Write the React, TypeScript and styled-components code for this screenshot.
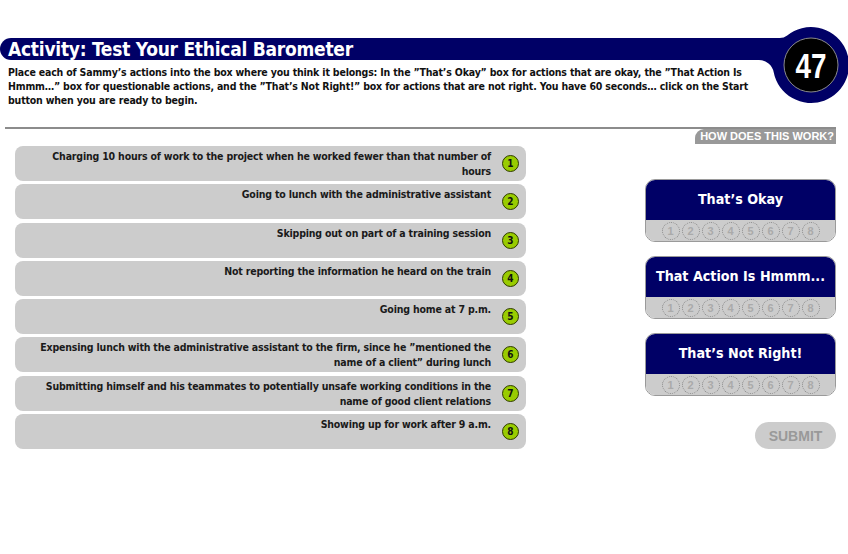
import { Fragment } from "react"
import styled, { createGlobalStyle } from "styled-components"

const GlobalStyle = createGlobalStyle`
  html, body {
    margin: 0;
    padding: 0;
    background: #ffffff;
  }
  body {
    font-family: "DejaVu Sans Condensed", "DejaVu Sans", sans-serif;
    color: #111;
  }
`

// each action is split into the lines it shows on screen
const actions: string[][] = [
  ["Charging 10 hours of work to the project when he worked fewer than that number of", "hours"],
  ["Going to lunch with the administrative assistant"],
  ["Skipping out on part of a training session"],
  ["Not reporting the information he heard on the train"],
  ["Going home at 7 p.m."],
  [
    "Expensing lunch with the administrative assistant to the firm, since he \u201Dmentioned the",
    "name of a client\u201D during lunch",
  ],
  [
    "Submitting himself and his teammates to potentially unsafe working conditions in the",
    "name of good client relations",
  ],
  ["Showing up for work after 9 a.m."],
]

const boxes = ["That\u2019s Okay", "That Action Is Hmmm...", "That\u2019s Not Right!"]

const ScreenBadge = () => (
  <BadgeWrap>
    <svg width="108" height="80" viewBox="740 25 108 80">
      <path
        d="M740 38 L779.7 38 A12 12 0 0 0 787.2 35.4 A38 38 0 1 1 773.7 72.2 A15 15 0 0 0 759 60 L740 60 Z"
        fill="#000066"
      />
      <circle cx="811" cy="65" r="27" fill="#000" stroke="#8a8a8a" strokeWidth="1" />
      <text
        x="811"
        y="78"
        textAnchor="middle"
        fill="#fff"
        fontFamily="'Liberation Sans', Arial, sans-serif"
        fontWeight="bold"
        fontSize="35"
        textLength="31"
        lengthAdjust="spacingAndGlyphs"
      >
        47
      </text>
    </svg>
  </BadgeWrap>
)

export default function App() {
  return (
    <Page>
      <GlobalStyle />
      <Header>
        <TitleBar>
          <Title>Activity: Test Your Ethical Barometer</Title>
        </TitleBar>
        <ScreenBadge />
      </Header>

      <Intro>
        Place each of Sammy’s actions into the box where you think it belongs: In the ”That’s Okay” box for
        actions that are okay, the ”That Action Is Hmmm…” box for questionable actions, and the ”That’s Not
        Right!” box for actions that are not right. You have 60 seconds… click on the Start button when you are
        ready to begin.
      </Intro>

      <Divider>
        <Rule />
        <HelpTab>HOW DOES THIS WORK?</HelpTab>
      </Divider>

      <Main>
        <ActionList>
          {actions.map((lines, i) => (
            <ActionRow key={i}>
              <ActionText>
                {lines.map((line, j) => (
                  <Fragment key={j}>
                    {j > 0 && <br />}
                    {line}
                  </Fragment>
                ))}
              </ActionText>
              <NumberBadge>{i + 1}</NumberBadge>
            </ActionRow>
          ))}
        </ActionList>

        <SidePanel>
          {boxes.map((label) => (
            <DropBox key={label}>
              <DropTitle>{label}</DropTitle>
              <SlotStrip>
                {actions.map((_, i) => (
                  <Slot key={i}>{i + 1}</Slot>
                ))}
              </SlotStrip>
            </DropBox>
          ))}
          <SubmitButton>SUBMIT</SubmitButton>
        </SidePanel>
      </Main>
    </Page>
  )
}

const Page = styled.div`
  width: 848px;
  min-height: 554px;
  position: relative;
`

const Header = styled.div`
  position: relative;
  padding-top: 38px;
`

const TitleBar = styled.div`
  width: 780px;
  height: 22px;
  background: #000066;
  border-radius: 11px 0 0 11px;
  display: flex;
  align-items: center;
  padding-left: 8px;
  box-sizing: border-box;
`

const Title = styled.h1`
  margin: 0;
  color: #fff;
  font-size: 19px;
  font-weight: 700;
  letter-spacing: -0.25px;
  line-height: 22px;
  white-space: nowrap;
`

const BadgeWrap = styled.div`
  position: absolute;
  top: 25px;
  left: 740px;
  line-height: 0;
`

const Intro = styled.p`
  margin: 5px 0 0;
  padding-left: 8px;
  width: 745px;
  font-size: 10.5px;
  font-weight: 700;
  letter-spacing: -0.18px;
  line-height: 14px;
`

const Divider = styled.div`
  margin-top: 20px;
  display: flex;
  flex-direction: column;
`

const Rule = styled.div`
  margin-left: 5px;
  width: 831px;
  height: 2px;
  background: #8c8c8c;
`

const HelpTab = styled.div`
  align-self: flex-end;
  margin-right: 12px;
  width: 141px;
  height: 15px;
  background: #999999;
  border-radius: 9px 0 0 0;
  color: #fff;
  font-family: "Liberation Sans", Arial, sans-serif;
  font-weight: 700;
  font-size: 11px;
  line-height: 15px;
  text-align: right;
  white-space: nowrap;
  padding-right: 2px;
  box-sizing: border-box;
`

const Main = styled.div`
  display: flex;
  align-items: flex-start;
  gap: 119px;
  padding-left: 15px;
  margin-top: 2px;
`

const ActionList = styled.div`
  width: 511px;
  display: flex;
  flex-direction: column;
  gap: 3.3px;
`

const ActionRow = styled.div`
  min-height: 35px;
  background: #cccccc;
  border-radius: 8px;
  display: flex;
  align-items: flex-start;
  justify-content: flex-end;
  padding: 3px 7px 2px 12px;
  box-sizing: border-box;
`

const ActionText = styled.div`
  flex: 1;
  text-align: right;
  white-space: nowrap;
  font-size: 10.5px;
  font-weight: 700;
  letter-spacing: -0.18px;
  line-height: 15px;
  color: #1a1a1a;
  padding-right: 11px;
`

const NumberBadge = styled.div`
  align-self: center;
  flex-shrink: 0;
  width: 17px;
  height: 17px;
  border-radius: 50%;
  background: #99cc00;
  border: 1.5px solid #2f3a00;
  box-sizing: border-box;
  display: flex;
  align-items: center;
  justify-content: center;
  font-size: 10px;
  font-weight: 700;
  color: #111;
  margin-top: -1px;
`

const SidePanel = styled.div`
  width: 191px;
  padding-top: 33px;
  display: flex;
  flex-direction: column;
  gap: 14px;
`

const DropBox = styled.div`
  border: 1px solid #9a9a9a;
  border-radius: 10px;
  overflow: hidden;
  display: flex;
  flex-direction: column;
`

const DropTitle = styled.div`
  height: 40px;
  background: #000066;
  color: #fff;
  font-size: 14.2px;
  font-weight: 700;
  display: flex;
  align-items: center;
  justify-content: center;
  padding-bottom: 3px;
  box-sizing: border-box;
`

const SlotStrip = styled.div`
  height: 21px;
  background: #cccccc;
  display: flex;
  align-items: center;
  justify-content: center;
  gap: 2px;
`

const Slot = styled.div`
  width: 18px;
  height: 18px;
  border-radius: 50%;
  border: 1.5px dotted #888;
  box-sizing: border-box;
  display: flex;
  align-items: center;
  justify-content: center;
  font-family: "Liberation Sans", Arial, sans-serif;
  font-size: 11px;
  font-weight: 700;
  color: #aaaaaa;
`

const SubmitButton = styled.button`
  align-self: flex-end;
  margin-top: 12px;
  width: 81px;
  height: 27px;
  border: none;
  border-radius: 14px;
  background: #cccccc;
  color: #999999;
  font-family: "Liberation Sans", Arial, sans-serif;
  font-size: 14px;
  font-weight: 700;
  padding: 0;
`
